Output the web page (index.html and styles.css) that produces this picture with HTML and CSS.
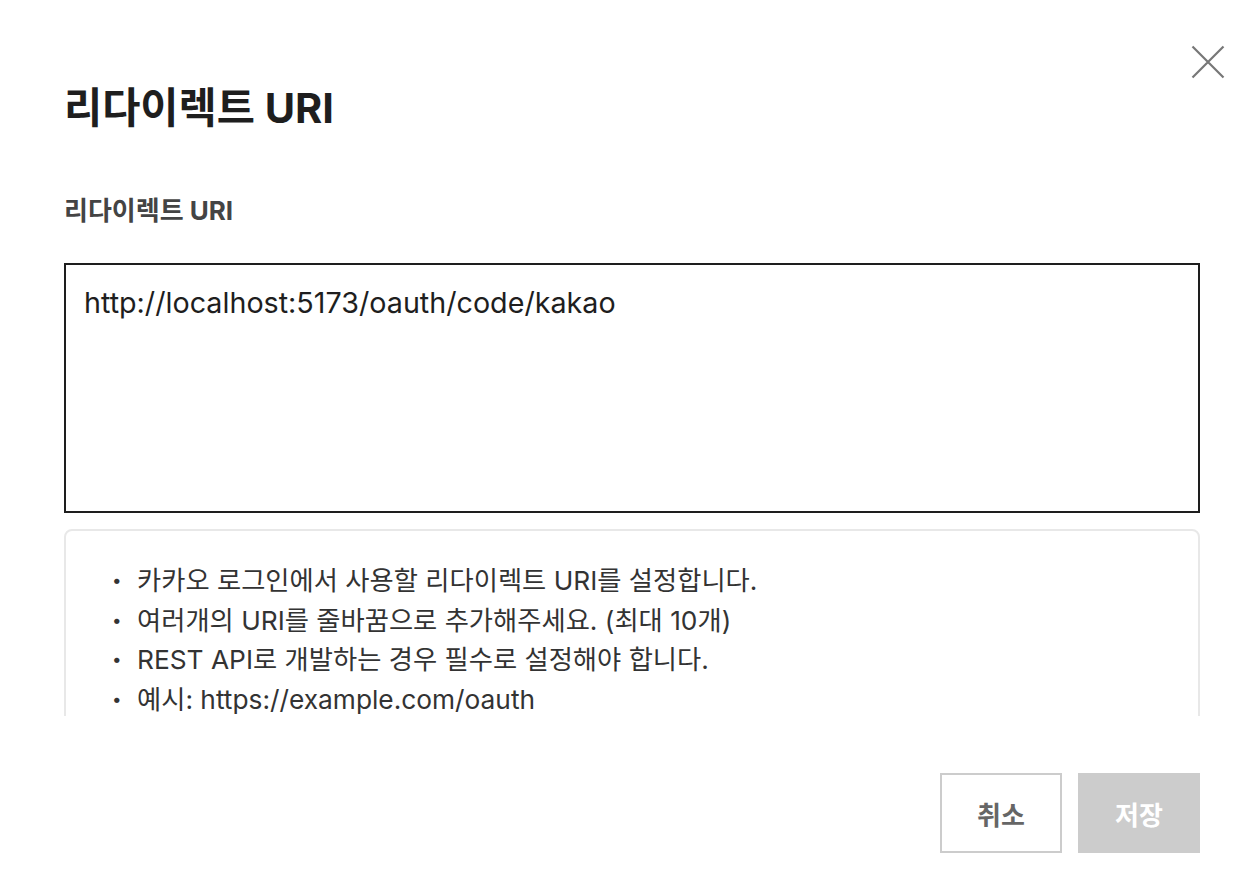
FILE: index.html
```html
<!DOCTYPE html>
<html lang="ko">
<head>
    <meta charset="UTF-8" />
    <meta name="viewport" content="width=device-width, initial-scale=1.0">
    <title>리다이렉트 URI</title>
    <link rel="stylesheet" href="styles.css">
</head>
<body>
    <div class="modal">
        <button class="close-button" aria-label="닫기">
            <svg width="34" height="34" viewBox="0 0 34 34">
                <path d="M1.5 1.5 L32.5 32.5 M32.5 1.5 L1.5 32.5" stroke="#777" stroke-width="2.2" fill="none" />
            </svg>
        </button>

        <h1 class="modal-title">리다이렉트 URI</h1>

        <div class="modal-body">
            <label class="field-label" for="redirectUri">리다이렉트 URI</label>
            <textarea id="redirectUri" class="uri-input">http://localhost:5173/oauth/code/kakao</textarea>

            <div class="info-box">
                <ul class="info-list">
                    <li>카카오 로그인에서 사용할 리다이렉트 URI를 설정합니다.</li>
                    <li>여러개의 URI를 줄바꿈으로 추가해주세요. (최대 10개)</li>
                    <li>REST API로 개발하는 경우 필수로 설정해야 합니다.</li>
                    <li>예시: https://example.com/oauth</li>
                </ul>
            </div>
        </div>

        <div class="modal-footer">
            <button class="btn btn-cancel">취소</button>
            <button class="btn btn-save" disabled>저장</button>
        </div>
    </div>
</body>
</html>
```

FILE: styles.css
```css
* {
    margin: 0;
    padding: 0;
    box-sizing: border-box;
    font-family: "Inter", "Noto Sans CJK KR", sans-serif;
}

body {
    background-color: #fff;
    color: #222;
}

.modal {
    position: relative;
    width: 1254px;
    height: 886px;
    padding: 84px 54px 0 64px;
    display: flex;
    flex-direction: column;
}

.close-button {
    position: absolute;
    top: 45px;
    right: 29px;
    width: 34px;
    height: 34px;
    border: none;
    background: none;
    cursor: pointer;
}

.close-button svg {
    display: block;
}

.modal-title {
    font-size: 41.5px;
    line-height: 48px;
    font-weight: 700;
    color: #1e1e1e;
}

.modal-body {
    height: 584px;
    padding-top: 63px;
    overflow-y: auto;
    scrollbar-width: none;
    display: flex;
    flex-direction: column;
}

.field-label {
    display: block;
    font-size: 26px;
    line-height: 32px;
    font-weight: 700;
    color: #444;
}

.uri-input {
    flex-shrink: 0;
    margin-top: 36px;
    width: 100%;
    height: 250px;
    border: 2px solid #1e1e1e;
    padding: 19px 18px;
    font-size: 28.7px;
    line-height: 38px;
    color: #1e1e1e;
    resize: none;
    outline: none;
}

.info-box {
    flex-shrink: 0;
    margin-top: 16px;
    border: 2px solid #e8e8e8;
    border-radius: 8px;
    padding: 30px 20px 30px 46px;
}

.info-list {
    list-style: none;
}

.info-list li {
    display: flex;
    font-size: 26.3px;
    line-height: 39.5px;
    color: #333;
}

.info-list li::before {
    content: "•";
    flex: 0 0 25px;
    font-size: 17px;
    color: #333;
}

.modal-footer {
    display: flex;
    justify-content: flex-end;
    gap: 16px;
    padding-top: 57px;
}

.btn {
    width: 122px;
    height: 80px;
    font-size: 26px;
    font-weight: 700;
    cursor: pointer;
}

.btn-cancel {
    background-color: #fff;
    border: 2px solid #ccc;
    color: #666;
}

.btn-save {
    background-color: #ccc;
    border: none;
    color: #fff;
    cursor: default;
}
```
